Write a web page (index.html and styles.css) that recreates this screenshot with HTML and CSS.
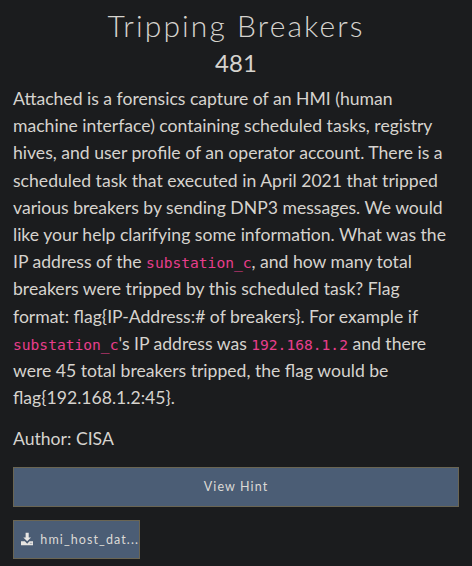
FILE: index.html
```html
<!DOCTYPE html>
<html>
<head>
<meta charset="utf-8">
<link rel="stylesheet" href="styles.css">
</head>
<body>
<div class="modal">
  <h2 class="title">Tripping Breakers</h2>
  <h3 class="value">481</h3>
  <div class="desc">
    <p>Attached is a forensics capture of an HMI (human machine interface) containing scheduled tasks, registry hives, and user profile of an operator account. There is a scheduled task that executed in April 2021 that tripped various breakers by sending DNP3 messages. We would like your help clarifying some information. What was the IP address of the <code>substation_c</code>, and how many total breakers were tripped by this scheduled task? Flag format: flag{IP-Address:# of breakers}. For example if <code>substation_c</code>'s IP address was <code>192.168.1.2</code> and there were 45 total breakers tripped, the flag would be flag{192.168.1.2:45}.</p>
    <p>Author: CISA</p>
  </div>
  <button class="btn btn-hint">View Hint</button>
  <div class="files">
    <button class="btn btn-file">
      <svg class="dl" viewBox="0 0 16 16" width="14" height="14"><path fill="#e8e6e3" d="M6 0h4v6h3l-5 5-5-5h3z"/><path fill="#e8e6e3" d="M0 11h5l3 3 3-3h5v5H0z"/><rect x="11.5" y="13" width="1" height="1" fill="#4b5d75"/><rect x="13.5" y="13" width="1" height="1" fill="#4b5d75"/></svg>
      <span>hmi_host_dat...</span>
    </button>
  </div>
</div>
</body>
</html>
```
FILE: styles.css
```css
html, body {
  margin: 0;
  padding: 0;
  background: #1b1c1e;
}
body {
  font-family: Lato, "Noto Sans", sans-serif;
  color: #d6d3ce;
}
.modal {
  padding: 6px 13px 0 13px;
}
.title {
  margin: 0;
  text-align: center;
  font-weight: 300;
  font-size: 30px;
  line-height: 38px;
  letter-spacing: 2.1px;
}
.value {
  margin: 0;
  text-align: center;
  font-weight: 400;
  font-size: 24px;
  line-height: 38px;
}
.desc {
  margin-top: 3px;
  margin-right: 7px;
  font-size: 17.6px;
  line-height: 27.2px;
}
.desc p {
  margin: 0 0 14px 0;
}
code {
  font-family: "DejaVu Sans Mono", "Liberation Mono", monospace;
  font-size: 14.6px;
  line-height: 0;
  color: #e83e8c;
}
.btn {
  display: flex;
  align-items: center;
  justify-content: center;
  background: #4b5d75;
  border: 1px solid #6a6553;
  color: #dcdad6;
  font-family: Lato, "Noto Sans", sans-serif;
  font-size: 12.5px;
  letter-spacing: 1.1px;
  cursor: pointer;
}
.btn-hint {
  width: 100%;
  height: 40px;
  margin-top: 4px;
}
.files {
  margin-top: 13px;
  display: flex;
}
.btn-file {
  width: 127px;
  height: 39px;
  gap: 7px;
  justify-content: flex-start;
  padding: 0 0 0 7px;
}
.dl {
  display: block;
}
```
